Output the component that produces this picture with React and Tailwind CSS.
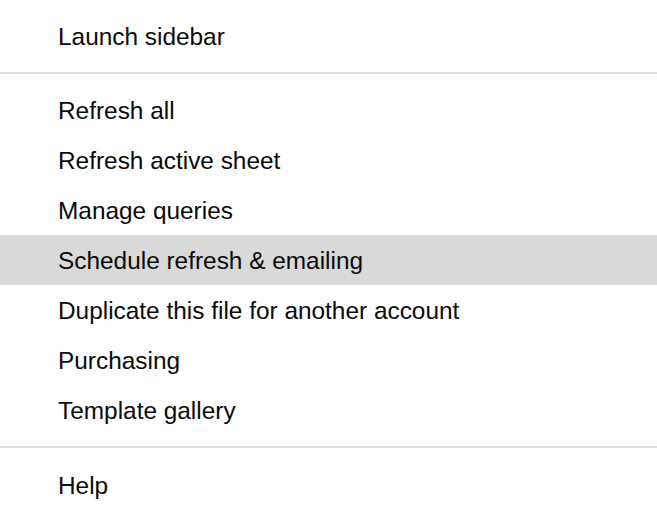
export default function App() {
  const rowCls = "h-[50px] leading-[52px] pl-[58px] text-[24.4px] text-[#0a0a0a]";
  const items = [
    "Refresh all",
    "Refresh active sheet",
    "Manage queries",
    "Schedule refresh & emailing",
    "Duplicate this file for another account",
    "Purchasing",
    "Template gallery",
  ];
  return (
    <div
      className="w-[657px] h-[520px] bg-white overflow-hidden pt-[11px]"
      style={{ fontFamily: '"Liberation Sans", Arial, Helvetica, sans-serif' }}
    >
      <div className={rowCls}>Launch sidebar</div>
      <div className="mt-[11px] mb-[11px] h-[2px] bg-[#dcdcdc]" />
      {items.map((t) => (
        <div
          key={t}
          className={
            rowCls +
            (t === "Schedule refresh & emailing" ? " bg-[#d9d9d9]" : "")
          }
        >
          {t}
        </div>
      ))}
      <div className="mt-[11px] mb-[12px] h-[2px] bg-[#dcdcdc]" />
      <div className={rowCls}>Help</div>
    </div>
  );
}
